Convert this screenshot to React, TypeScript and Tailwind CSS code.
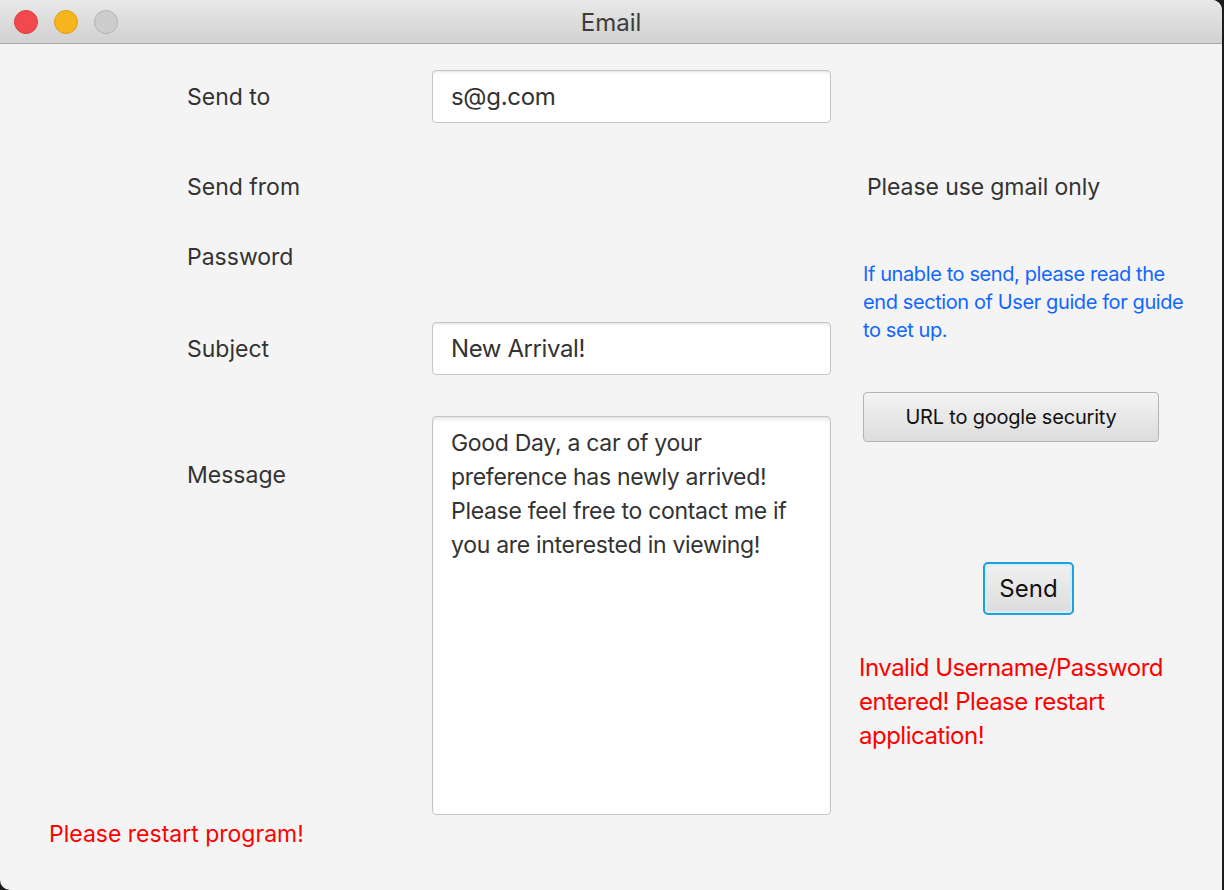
export default function App() {
  const font = { fontFamily: "Inter, 'Noto Sans', sans-serif" };
  return (
    <div className="h-[890px] w-[1224px] overflow-hidden bg-[#1c1c1c]" style={font}>
      <div className="flex h-[890px] w-[1222px] flex-col overflow-hidden rounded-tr-[10px] rounded-bl-[10px] bg-[#f4f4f4]">
        {/* title bar */}
        <div className="relative flex h-[44px] shrink-0 items-center justify-center border-b border-[#a9a9a9] bg-gradient-to-b from-[#e8e8e8] to-[#d1d1d1]">
          <div className="absolute left-[14px] top-[10px] flex gap-[16px]">
            <span className="h-[24px] w-[24px] rounded-full border border-[#dc3a3c] bg-[#f24a4c]" />
            <span className="h-[24px] w-[24px] rounded-full border border-[#dea01a] bg-[#f6b51c]" />
            <span className="h-[24px] w-[24px] rounded-full border border-[#b3b3b3] bg-[#cdcdcd]" />
          </div>
          <span className="mt-[2px] text-[24px] text-[#3c3c3c]">Email</span>
        </div>

        <div className="flex flex-1">
          {/* left side */}
          <div className="flex w-[859px] flex-col">
            <div className="ml-[187px] mt-[26px] flex h-[53px] items-center">
              <span className="mt-[2px] w-[245px] text-[23px] text-[#333]">Send to</span>
              <div className="flex h-[53px] w-[399px] items-center rounded-[4px] border border-[#c4c4c4] bg-white px-[18px] text-[24px] tracking-[-0.3px] text-[#333] shadow-[inset_0_3px_3px_-2px_rgba(0,0,0,0.12)]">
                s@g.com
              </div>
            </div>
            <div className="ml-[187px] mt-[44px] flex h-[40px] items-center text-[23px] text-[#333]">Send from</div>
            <div className="ml-[187px] mt-[30px] flex h-[40px] items-center text-[23px] text-[#333]">Password</div>
            <div className="ml-[187px] mt-[45px] flex h-[53px] items-center">
              <span className="mt-[2px] w-[245px] text-[23px] text-[#333]">Subject</span>
              <div className="flex h-[53px] w-[399px] items-center rounded-[4px] border border-[#c4c4c4] bg-white px-[18px] text-[24px] tracking-[-0.4px] text-[#333] shadow-[inset_0_3px_3px_-2px_rgba(0,0,0,0.12)]">
                New Arrival!
              </div>
            </div>
            <div className="ml-[187px] mt-[41px] flex">
              <span className="mt-[44px] h-[30px] w-[245px] text-[23px] leading-[30px] text-[#333]">Message</span>
              <div className="h-[399px] w-[399px] rounded-[4px] border border-[#c4c4c4] bg-white px-[18px] pt-[9px] text-[23px] leading-[34px] tracking-[-0.3px] text-[#333] shadow-[inset_0_4px_4px_-2px_rgba(0,0,0,0.12)]">
                Good Day, a car of your
                <br />
                preference has newly arrived!
                <br />
                Please feel free to contact me if
                <br />
                you are interested in viewing!
              </div>
            </div>
            <div className="ml-[49px] mt-[2px] text-[23px] leading-[34px] text-[#ff0000]">Please restart program!</div>
          </div>

          {/* right side */}
          <div className="flex flex-1 flex-col">
            <div className="ml-[8px] mt-[127px] h-[32px] text-[23px] leading-[32px] tracking-[-0.1px] text-[#333]">Please use gmail only</div>
            <div className="ml-[4px] mt-[57px] whitespace-nowrap text-[20px] leading-[28px] tracking-[-0.4px] text-[#1166ff]">
              If unable to send, please read the
              <br />
              end section of User guide for guide
              <br />
              to set up.
            </div>
            <div className="ml-[4px] mt-[48px] flex h-[50px] w-[296px] items-center justify-center overflow-hidden whitespace-nowrap rounded-[4px] border border-[#b4b4b4] bg-gradient-to-b from-[#f3f3f3] to-[#dddddd] text-[20px] tracking-[-0.2px] text-[#111]">
              URL to google security
            </div>
            <div className="ml-[124px] mt-[120px] flex h-[53px] w-[91px] items-center justify-center rounded-[5px] border-2 border-[#1ea0dc] bg-gradient-to-b from-[#f1f1f1] to-[#dcdcdc] text-[24px] text-[#111] shadow-[inset_0_0_0_2px_#d6ecf7]">
              Send
            </div>
            <div className="mt-[36px] text-[24px] leading-[34px] tracking-[-0.5px] text-[#ff0000]">
              Invalid Username/Password
              <br />
              entered! Please restart
              <br />
              application!
            </div>
          </div>
        </div>
      </div>
    </div>
  );
}
